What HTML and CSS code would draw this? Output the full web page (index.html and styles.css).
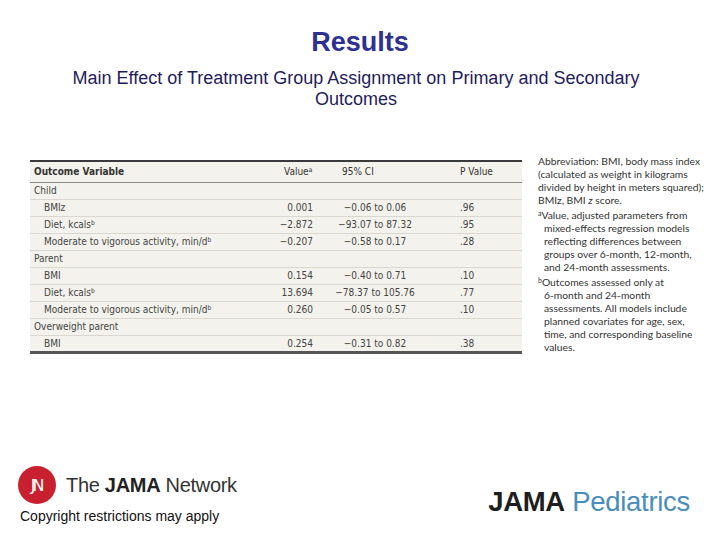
FILE: index.html
```html
<!DOCTYPE html>
<html>
<head>
<meta charset="utf-8">
<link rel="stylesheet" href="styles.css">
</head>
<body>
<div class="page">
  <header class="head">
    <h1 class="title">Results</h1>
    <p class="subtitle">Main Effect of Treatment Group Assignment on Primary and Secondary<br>Outcomes</p>
  </header>

  <main class="main">
    <table class="tbl">
      <colgroup>
        <col class="w1"><col class="w2"><col class="w3"><col class="w4">
      </colgroup>
      <thead>
        <tr>
          <th class="c1">Outcome Variable</th>
          <th class="c2">Value<sup>a</sup></th>
          <th class="c3">95% CI</th>
          <th class="c4">P Value</th>
        </tr>
      </thead>
      <tbody>
        <tr class="grp"><td class="c1">Child</td><td></td><td></td><td></td></tr>
        <tr><td class="c1 sub">BMIz</td><td class="c2">0.001</td><td class="c3">−0.06 to 0.06</td><td class="c4">.96</td></tr>
        <tr><td class="c1 sub">Diet, kcals<sup>b</sup></td><td class="c2">−2.872</td><td class="c3">−93.07 to 87.32</td><td class="c4">.95</td></tr>
        <tr><td class="c1 sub">Moderate to vigorous activity, min/d<sup>b</sup></td><td class="c2">−0.207</td><td class="c3">−0.58 to 0.17</td><td class="c4">.28</td></tr>
        <tr class="grp"><td class="c1">Parent</td><td></td><td></td><td></td></tr>
        <tr><td class="c1 sub">BMI</td><td class="c2">0.154</td><td class="c3">−0.40 to 0.71</td><td class="c4">.10</td></tr>
        <tr><td class="c1 sub">Diet, kcals<sup>b</sup></td><td class="c2">13.694</td><td class="c3">−78.37 to 105.76</td><td class="c4">.77</td></tr>
        <tr><td class="c1 sub">Moderate to vigorous activity, min/d<sup>b</sup></td><td class="c2">0.260</td><td class="c3">−0.05 to 0.57</td><td class="c4">.10</td></tr>
        <tr class="grp"><td class="c1">Overweight parent</td><td></td><td></td><td></td></tr>
        <tr><td class="c1 sub">BMI</td><td class="c2">0.254</td><td class="c3">−0.31 to 0.82</td><td class="c4">.38</td></tr>
      </tbody>
    </table>

    <aside class="notes">
      <p class="note">Abbreviation: BMI, body mass index<br>(calculated as weight in kilograms<br>divided by height in meters squared);<br>BMIz, BMI <i>z</i> score.</p>
      <p class="note fn"><sup>a</sup>Value, adjusted parameters from<br>mixed-effects regression models<br>reflecting differences between<br>groups over 6-month, 12-month,<br>and 24-month assessments.</p>
      <p class="note fn"><sup>b</sup>Outcomes assessed only at<br>6-month and 24-month<br>assessments. All models include<br>planned covariates for age, sex,<br>time, and corresponding baseline<br>values.</p>
    </aside>
  </main>

  <footer class="foot">
    <div class="brand">
      <div class="network">
        <div class="seal">JN</div>
        <div class="netname">The <b>JAMA</b> Network</div>
      </div>
      <div class="copy">Copyright restrictions may apply</div>
    </div>
    <div class="journal"><b>JAMA</b> <span class="ped">Pediatrics</span></div>
  </footer>
</div>
</body>
</html>
```

FILE: styles.css
```css
html, body {
  margin: 0;
  padding: 0;
  background: #ffffff;
}

.page {
  width: 720px;
  height: 540px;
  overflow: hidden;
  display: flex;
  flex-direction: column;
  font-family: "Liberation Sans", Arial, sans-serif;
}

.head {
  padding-top: 27px;
  text-align: center;
}

.title {
  margin: 0;
  font-size: 27px;
  line-height: 30px;
  font-weight: bold;
  color: #2e3192;
}

.subtitle {
  margin: 11px 0 0;
  padding-right: 8px;
  font-size: 18px;
  line-height: 21px;
  color: #1f1c5c;
}

.main {
  margin-top: 45px;
  display: flex;
  align-items: flex-start;
  padding-left: 30px;
  gap: 16px;
}

.tbl {
  flex: none;
  margin-top: 5px;
  width: 492px;
  border-collapse: collapse;
  table-layout: fixed;
  background: #f3f2ec;
  font-family: "Liberation Sans Narrow", "DejaVu Sans Condensed", sans-serif;
  font-size: 10px;
  color: #444;
  border-top: 2px solid #3a3a3a;
  border-bottom: 3px solid #555;
}

.w1 { width: 245px; }
.w2 { width: 45px; }
.w3 { width: 110px; }
.w4 { width: 92px; }

.tbl th,
.tbl td {
  box-sizing: border-box;
  padding: 0;
  white-space: nowrap;
}

.tbl th {
  height: 21px;
  font-weight: normal;
  color: #333;
  text-align: left;
  border-bottom: 1px solid #8a8a86;
}

.tbl thead .c1 {
  font-weight: bold;
  color: #333;
}

.tbl td {
  height: 17px;
  border-bottom: 1px solid #d9d7cf;
}

.tbl tbody tr:last-child td {
  border-bottom: none;
}

.tbl sup {
  font-size: 6.5px;
  line-height: 0;
  vertical-align: 3px;
}

.c1 {
  padding-left: 4px !important;
}

.c1.sub {
  padding-left: 14px !important;
}

td.c2 {
  text-align: right;
  padding-right: 7px !important;
}

th.c2 {
  padding-left: 9px !important;
}

td.c3 {
  text-align: center;
}

th.c3 {
  padding-left: 22px !important;
}

.c4 {
  padding-left: 30px !important;
}

.notes {
  flex: none;
  width: 180px;
  white-space: nowrap;
  font-family: Lato, "Open Sans", sans-serif;
  font-size: 10.3px;
  line-height: 13px;
  color: #333;
}

.note {
  margin: 0 0 2px;
}

.note.fn {
  padding-left: 6px;
  text-indent: -6px;
}

.note sup {
  font-size: 7px;
  line-height: 0;
  vertical-align: 3px;
}

.foot {
  margin-top: auto;
  display: flex;
  justify-content: space-between;
  align-items: flex-end;
  padding: 0 30px 16px 18px;
}

.brand {
  display: flex;
  flex-direction: column;
}

.network {
  display: flex;
  align-items: center;
  gap: 10px;
}

.seal {
  width: 38px;
  height: 38px;
  border-radius: 50%;
  background: #c8202f;
  color: #ffffff;
  font-family: "DejaVu Sans", sans-serif;
  font-size: 16px;
  letter-spacing: -3px;
  display: flex;
  align-items: center;
  justify-content: center;
  padding-right: 2px;
  box-sizing: border-box;
}

.netname {
  font-size: 20px;
  color: #333;
  letter-spacing: -0.3px;
}

.netname b {
  color: #222;
}

.copy {
  margin-top: 4px;
  padding-left: 2px;
  font-size: 14px;
  line-height: 16px;
  color: #111;
}

.journal {
  margin-bottom: 7px;
  font-size: 27.5px;
  line-height: 30px;
  color: #222;
  letter-spacing: -0.3px;
}

.journal b {
  color: #1e1e1e;
}

.ped {
  color: #4a8dbd;
}
```
